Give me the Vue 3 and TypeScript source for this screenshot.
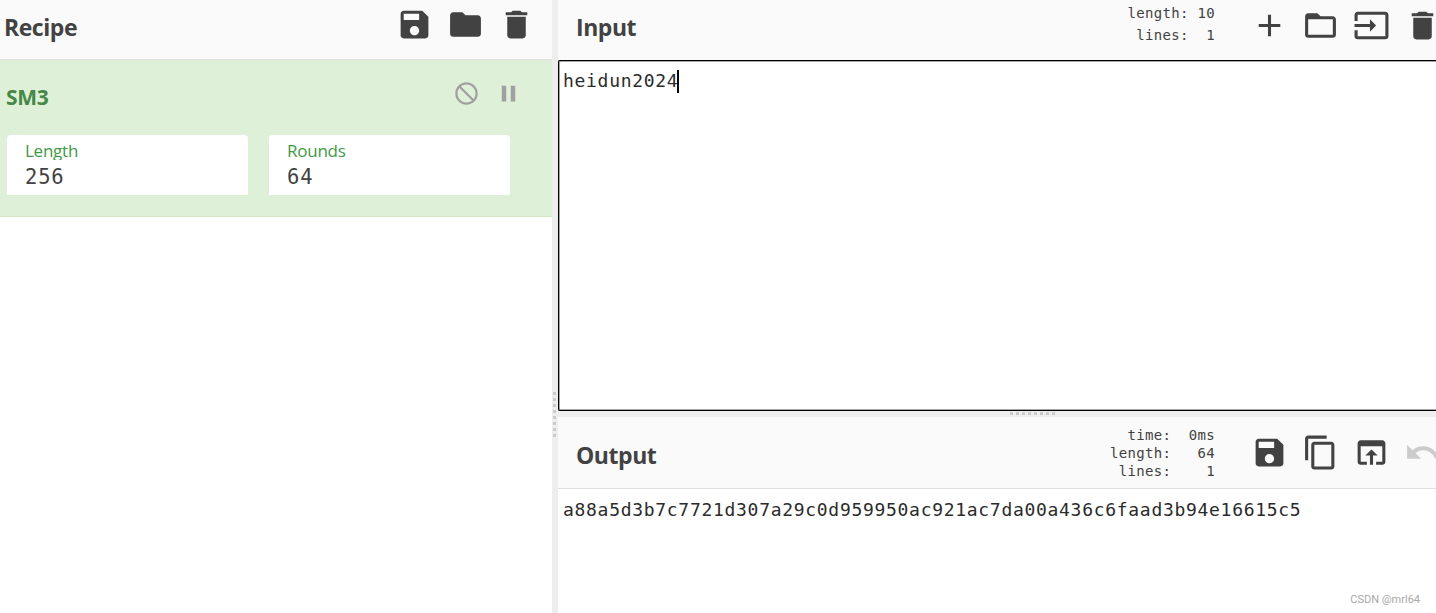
<script setup lang="ts">
const icons: Record<string, string> = {
  save: 'M17 3H5c-1.11 0-2 .9-2 2v14c0 1.1.89 2 2 2h14c1.1 0 2-.9 2-2V7l-4-4zm-5 16c-1.66 0-3-1.34-3-3s1.34-3 3-3 3 1.34 3 3-1.34 3-3 3zm3-10H5V5h10v4z',
  folder: 'M10 4H4c-1.1 0-1.99.9-1.99 2L2 18c0 1.1.9 2 2 2h16c1.1 0 2-.9 2-2V8c0-1.1-.9-2-2-2h-8l-2-2z',
  trash: 'M6 19c0 1.1.9 2 2 2h8c1.1 0 2-.9 2-2V7H6v12zM19 4h-3.5l-1-1h-5l-1 1H5v2h14V4z',
  add: 'M19 13h-6v6h-2v-6H5v-2h6V5h2v6h6v2z',
  folderOpen: 'M20 6h-8l-2-2H4c-1.1 0-1.99.9-1.99 2L2 18c0 1.1.9 2 2 2h16c1.1 0 2-.9 2-2V8c0-1.1-.9-2-2-2zm0 12H4V8h16v10z',
  input: 'M21 3.01H3c-1.1 0-2 .9-2 2V9h2V4.99h18v14.03H3V15H1v4.01c0 1.1.9 1.98 2 1.98h18c1.1 0 2-.88 2-1.98v-14c0-1.11-.9-2-2-2zM11 16l4-4-4-4v3H1v2h10v3z',
  copy: 'M16 1H4c-1.1 0-2 .9-2 2v14h2V3h12V1zm3 4H8c-1.1 0-2 .9-2 2v14c0 1.1.9 2 2 2h11c1.1 0 2-.9 2-2V7c0-1.1-.9-2-2-2zm0 16H8V7h11v14z',
  open: 'M19 4H5c-1.11 0-2 .9-2 2v12c0 1.1.89 2 2 2h4v-2H5V8h14v10h-4v2h4c1.1 0 2-.9 2-2V6c0-1.1-.89-2-2-2zm-7 6l-4 4h3v6h2v-6h3l-4-4z',
  undo: 'M12.5 8c-2.65 0-5.05.99-6.9 2.6L2 7v9h9l-3.62-3.62c1.39-1.16 3.16-1.88 5.12-1.88 3.54 0 6.55 2.31 7.6 5.5l2.37-.78C21.08 11.03 17.15 8 12.5 8z',
  block: 'M12 2C6.48 2 2 6.48 2 12s4.48 10 10 10 10-4.48 10-10S17.52 2 12 2zM4 12c0-4.42 3.58-8 8-8 1.85 0 3.55.63 4.9 1.69L5.69 16.9C4.63 15.55 4 13.85 4 12zm8 8c-1.85 0-3.55-.63-4.9-1.69L18.31 7.1C19.37 8.45 20 10.15 20 12c0 4.42-3.58 8-8 8z',
  pause: 'M6 19h4V5H6v14zm8-14v14h4V5h-4z',
}
const recipeTools = [icons.save, icons.folder, icons.trash]
const inputTools = [icons.add, icons.folderOpen, icons.input, icons.trash]
const outputTools = [icons.save, icons.copy, icons.open]
const args = [
  { label: 'Length', value: '256' },
  { label: 'Rounds', value: '64' },
]
const inputStats = ['length: 10', 'lines:  1']
const outputStats = ['time:  0ms', 'length:   64', 'lines:    1']
</script>

<template>
  <div class="app">
    <section class="recipe">
      <header class="head recipe-head">
        <h2 class="recipe-title">Recipe</h2>
        <div class="tools">
          <svg v-for="d in recipeTools" :key="d" class="tool" viewBox="0 0 24 24"><path :d="d" /></svg>
        </div>
      </header>
      <div class="op">
        <div class="op-top">
          <span class="op-name">SM3</span>
          <div class="op-tools">
            <svg class="op-icon flip" viewBox="0 0 24 24"><path :d="icons.block" /></svg>
            <svg class="op-icon" viewBox="0 0 24 24"><path :d="icons.pause" /></svg>
          </div>
        </div>
        <div class="args">
          <div v-for="a in args" :key="a.label" class="arg">
            <div class="arg-label">{{ a.label }}</div>
            <div class="arg-value">{{ a.value }}</div>
          </div>
        </div>
      </div>
    </section>

    <div class="v-gutter"><span class="v-dots"></span></div>

    <section class="io">
      <header class="head input-head">
        <h2 class="title">Input</h2>
        <div class="stats input-stats">
          <div v-for="s in inputStats" :key="s" class="stat">{{ s }}</div>
        </div>
        <div class="tools over">
          <svg v-for="d in inputTools" :key="d" class="tool" viewBox="0 0 24 24"><path :d="d" /></svg>
        </div>
      </header>
      <div class="input-box">
        <span class="mono">heidun2024</span><span class="caret"></span>
      </div>
      <div class="h-gutter"><span class="h-dots"></span></div>
      <header class="head output-head">
        <h2 class="title">Output</h2>
        <div class="stats output-stats">
          <div v-for="s in outputStats" :key="s" class="stat">{{ s }}</div>
        </div>
        <div class="tools over">
          <svg v-for="d in outputTools" :key="d" class="tool" viewBox="0 0 24 24"><path :d="d" /></svg>
          <svg class="tool undo" viewBox="0 0 24 24"><path :d="icons.undo" /></svg>
        </div>
      </header>
      <div class="output-box">
        <span class="mono">a88a5d3b7c7721d307a29c0d959950ac921ac7da00a436c6faad3b94e16615c5</span>
      </div>
    </section>
    <div class="mark">CSDN @mrl64</div>
  </div>
</template>

<style>
html, body { margin: 0; padding: 0; overflow: hidden; background: #fff; }
</style>

<style scoped>
.app {
  position: relative;
  display: flex;
  width: 1436px;
  height: 613px;
  overflow: hidden;
  background: #fff;
  color: #424242;
  font-family: "Open Sans", "Noto Sans", sans-serif;
}
.recipe { width: 552px; flex: none; display: flex; flex-direction: column; }
.head {
  display: flex;
  align-items: center;
  background: #fafafa;
  box-sizing: border-box;
  border-bottom: 1px solid #e0e0e0;
}
.recipe-head { height: 60px; padding: 0 17.5px 10px 4px; justify-content: space-between; }
.recipe-title, .title {
  margin: 4px 0 0;
  font-size: 23px;
  font-weight: 700;
  line-height: 30px;
  letter-spacing: -0.45px;
  flex: none;
}
.tools { display: flex; gap: 14px; }
.tool { width: 37px; height: 37px; fill: #424242; flex: none; }
.undo { fill: #ccc; }
.over { margin-right: -5px; }
.op {
  height: 157px;
  box-sizing: border-box;
  background: #dff0d8;
  border-bottom: 1px solid #d6e9c6;
  padding-left: 7px;
}
.op-top { display: flex; align-items: flex-start; height: 75px; }
.op-name {
  margin: 23px 0 0 -1px;
  font-size: 21px;
  font-weight: 700;
  line-height: 28px;
  color: #468847;
  letter-spacing: -0.3px;
}
.op-tools { display: flex; gap: 15px; margin: 20px 0 0 auto; padding-right: 30px; }
.op-icon { width: 27px; height: 27px; fill: #a0a0a0; }
.flip { transform: scaleX(-1); }
.args { display: flex; gap: 21px; }
.arg {
  width: 241px;
  height: 60px;
  box-sizing: border-box;
  background: #fff;
  border-radius: 4px 4px 0 0;
  padding: 4px 0 0 18px;
}
.arg-label {
  height: 21px;
  overflow: hidden;
  font-size: 17px;
  line-height: 23px;
  color: #3f9a45;
  letter-spacing: -0.25px;
}
.arg-value {
  margin-top: 2px;
  font-family: "DejaVu Sans Mono", monospace;
  font-size: 20.5px;
  line-height: 30px;
  color: #424242;
  letter-spacing: 0.8px;
}
.v-gutter {
  position: relative;
  width: 6px;
  flex: none;
  background: #eee;
}
.v-dots {
  position: absolute;
  left: 1px;
  top: 392px;
  width: 3px;
  height: 46px;
  background: repeating-linear-gradient(to bottom, #ccc 0 3px, transparent 3px 6px);
}
.io { flex: 1; min-width: 0; display: flex; flex-direction: column; }
.input-head { height: 60px; border-bottom: 0; padding: 0 0 10px 18px; }
.stats {
  margin-left: auto;
  margin-right: 36px;
  text-align: right;
  font-family: "DejaVu Sans Mono", monospace;
  font-size: 14px;
  letter-spacing: 0.32px;
  color: #424242;
}
.stat { white-space: pre; }
.input-stats { line-height: 22px; margin-top: -2px; }
.output-stats { line-height: 18px; }
.input-box {
  height: 351px;
  box-sizing: border-box;
  border: 1px solid #000;
  border-right: 0;
  border-radius: 2px 0 0 2px;
  box-shadow: inset 1px 1px 0 rgba(0, 0, 0, 0.35), inset 0 -1px 0 rgba(0, 0, 0, 0.35);
  padding: 9px 0 0 4px;
  display: flex;
  align-items: flex-start;
}
.mono {
  font-family: "DejaVu Sans Mono", monospace;
  font-size: 18px;
  letter-spacing: 0.7px;
  line-height: 22px;
  color: #2b2b2b;
  white-space: pre;
}
.caret { width: 1.5px; height: 23px; background: #000; margin-left: -1px; }
.h-gutter { position: relative; height: 6px; flex: none; background: #eee; }
.h-dots {
  position: absolute;
  left: 452px;
  top: 1px;
  width: 48px;
  height: 3px;
  background: repeating-linear-gradient(to right, #ccc 0 3px, transparent 3px 6px);
}
.output-head { height: 72px; padding: 0 0 0 18px; }
.output-box { flex: 1; padding: 10px 0 0 5px; }
.mark {
  position: absolute;
  right: 16px;
  bottom: 6px;
  font-family: Roboto, sans-serif;
  font-size: 11px;
  line-height: 14px;
  color: #a8a8a8;
}
</style>
